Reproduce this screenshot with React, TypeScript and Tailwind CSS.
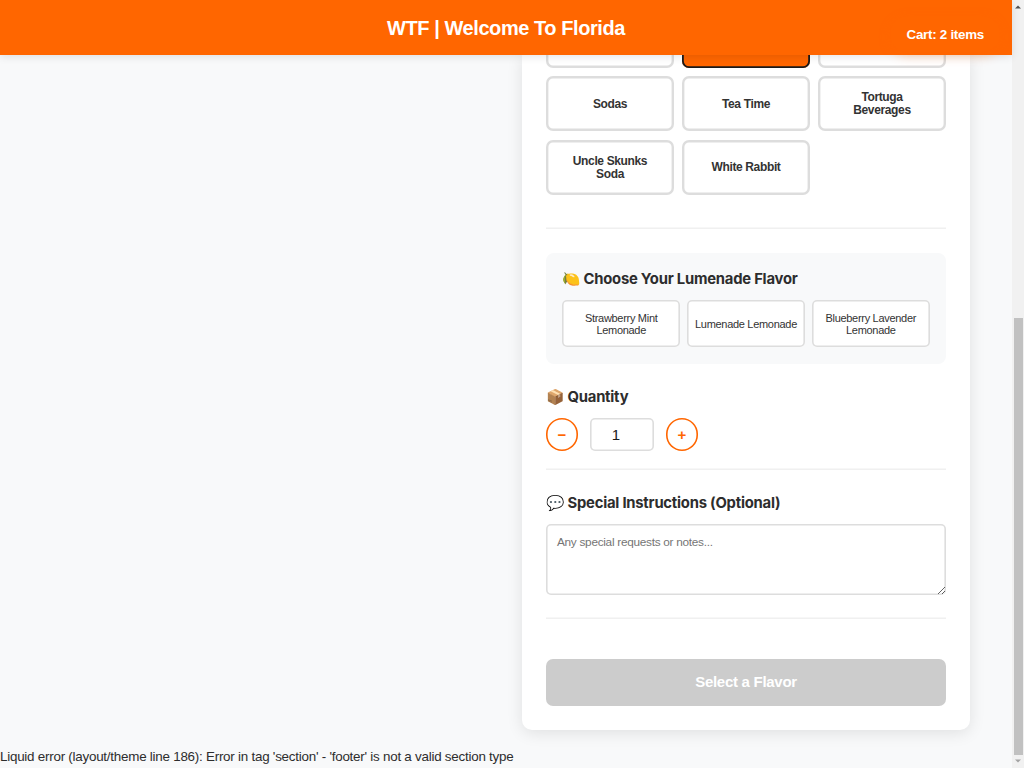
import React from 'react';

const heading = "flex h-[22px] items-center whitespace-pre font-['Inter','Noto_Color_Emoji',sans-serif] text-[14.8px] font-bold leading-[22px] tracking-[-0.22px] text-[#2d2d2d]";
const round = 'flex h-[32.4px] w-8 items-center justify-center rounded-full text-[15px] font-bold leading-[20px] text-[#ff6600] shadow-[inset_0_0_0_1.6px_#ff6600]';

function Brand({ label, selected = false }: { label: string; selected?: boolean }) {
  return (
    <button
      className={
        selected
          ? 'h-[55.2px] rounded-[7px] bg-[#ff6600] text-white shadow-[inset_0_0_0_1.8px_#1a1a1a]'
          : 'h-[55.2px] rounded-[7px] bg-white px-[18px] font-bold text-[#333] shadow-[inset_0_0_0_2.4px_#ddd]'
      }
    >
      <span className="block pt-px text-[12px] leading-[13px] tracking-[-0.36px]">{label}</span>
    </button>
  );
}

function Flavor({ label }: { label: string }) {
  return (
    <button className="h-[47.6px] whitespace-pre-line rounded-[5px] bg-white pt-px text-[11px] leading-[12px] tracking-[-0.3px] text-[#333] shadow-[inset_0_0_0_1.6px_#ddd]">
      {label}
    </button>
  );
}

export default function App() {
  return (
    <div className="flex h-[768px] w-[1024px] overflow-hidden bg-[#f8f9fa] font-['Liberation_Sans',Arial,sans-serif] text-[#2d2d2d]">
      <div className="flex h-full w-[1012px] flex-col">
        <header className="relative z-10 flex h-[55.2px] shrink-0 items-center justify-center bg-[#ff6600] shadow-[0_2px_8px_rgba(0,0,0,0.1)]">
          <h1 className="text-[20px] font-bold leading-[24px] tracking-[-0.43px] text-white">WTF | Welcome To Florida</h1>
          <div className="absolute right-[12px] top-[16px] -z-10 h-[36px] w-[110px] rounded-full shadow-[0_3px_12px_rgba(255,102,0,0.3)]" />
          <div className="absolute right-[28px] top-[25px] text-[13.4px] font-bold leading-[19px] tracking-[-0.28px] text-white">Cart: 2 items</div>
        </header>

        <main className="ml-[522px] h-[675px] w-[448px] shrink-0 rounded-b-[10px] bg-white px-6 shadow-[0_3px_16px_rgba(0,0,0,0.1)]">
          <section className="h-[174px] shadow-[inset_0_-1.6px_0_#f0f0f0]">
            <div className="h-[141px] overflow-hidden">
              <div className="-mt-[42.6px] grid grid-cols-3 gap-x-2 gap-y-[8.4px]">
                <Brand label="" />
                <Brand label="" selected />
                <Brand label="" />
                <Brand label="Sodas" />
                <Brand label="Tea Time" />
                <Brand label="Tortuga Beverages" />
                <Brand label="Uncle Skunks Soda" />
                <Brand label="White Rabbit" />
              </div>
            </div>
          </section>

          <section className="mt-[24.2px] h-[110.4px] rounded-[8px] bg-[#f8f9fa] px-4 pt-[14.5px]">
            <h2 className={heading}>🍋 Choose Your Lumenade Flavor</h2>
            <div className="mt-[10px] grid grid-cols-3 gap-[6.4px]">
              <Flavor label={'Strawberry Mint\nLemonade'} />
              <Flavor label="Lumenade Lemonade" />
              <Flavor label={'Blueberry Lavender\nLemonade'} />
            </div>
          </section>

          <section className="h-[105.8px] pt-[22.6px] shadow-[inset_0_-1.6px_0_#f0f0f0]">
            <h2 className={heading}>📦 Quantity</h2>
            <div className="mt-[9.5px] flex items-center gap-3">
              <button className={round}>−</button>
              <input type="text" defaultValue="1" className="h-[33.6px] w-16 rounded-[5px] bg-white pr-[12px] text-center text-[15px] text-[#1a1a1a] shadow-[inset_0_0_0_1.6px_#ddd]" />
              <button className={round}>+</button>
            </div>
          </section>

          <section className="h-[149.2px] pt-[22px] shadow-[inset_0_-1.6px_0_#f0f0f0]">
            <h2 className={heading}>💬 Special Instructions (Optional)</h2>
            <textarea
              placeholder="Any special requests or notes..."
              className="mt-[10.4px] block h-[70.6px] w-full resize rounded-[5px] border-0 bg-white px-[11px] py-[9px] text-[11.8px] leading-[18px] tracking-[-0.28px] shadow-[inset_0_0_0_1.6px_#ddd] placeholder:text-[#757575]"
            />
          </section>

          <button className="mt-[40.2px] h-[47px] w-full rounded-[7px] bg-[#ccc] text-[15px] font-bold tracking-[-0.28px] text-white">Select a Flavor</button>
        </main>

        <p className="mt-[14.8px] whitespace-nowrap text-[13.4px] leading-[24px] tracking-[-0.24px]">Liquid error (layout/theme line 186): Error in tag 'section' - 'footer' is not a valid section type</p>
      </div>

      <div className="flex w-3 flex-col items-center justify-between bg-[#f1f1f1] py-[5px]">
        <svg width="6" height="4" viewBox="0 0 6 4"><path d="M0 3.5 3 .5 6 3.5z" fill="#505050" /></svg>
        <div className="mt-auto h-[437px] w-[9px] bg-[#c1c1c1]" />
        <svg className="mt-[4.5px]" width="6" height="4" viewBox="0 0 6 4"><path d="M0 .5 3 3.5 6 .5z" fill="#a3a3a3" /></svg>
      </div>
    </div>
  );
}
